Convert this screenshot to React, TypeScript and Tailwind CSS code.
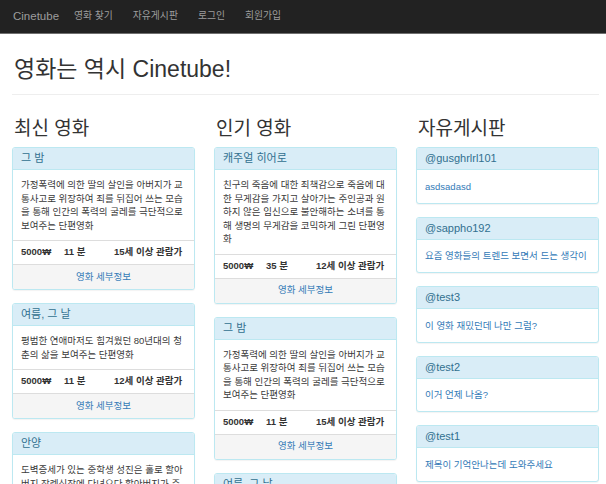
import React from 'react';

const FONT = '"Liberation Sans", "Noto Sans CJK KR", sans-serif';

interface Movie {
  title: string;
  desc: string;
  price: string;
  time: string;
  age: string;
}

const night: Movie = {
  title: '그 밤',
  desc: '가정폭력에 의한 딸의 살인을 아버지가 교통사고로 위장하여 죄를 뒤집어 쓰는 모습을 통해 인간의 폭력의 굴레를 극단적으로 보여주는 단편영화',
  price: '5000₩',
  time: '11 분',
  age: '15세 이상 관람가',
};

const summer: Movie = {
  title: '여름, 그 날',
  desc: '평범한 연애마저도 힘겨웠던 80년대의 청춘의 삶을 보여주는 단편영화',
  price: '5000₩',
  time: '11 분',
  age: '12세 이상 관람가',
};

const anyang: Movie = {
  title: '안양',
  desc: '도벽증세가 있는 중학생 성진은 홀로 할아버지 장례식장에 다녀오다 할아버지가 준 돈을 잃어버리게 되는 단편영화',
  price: '5000₩',
  time: '20 분',
  age: '12세 이상 관람가',
};

const hero: Movie = {
  title: '캐주얼 히어로',
  desc: '친구의 죽음에 대한 죄책감으로 죽음에 대한 무게감을 가지고 살아가는 주인공과 원하지 않은 임신으로 불안해하는 소녀를 통해 생명의 무게감을 코믹하게 그린 단편영화',
  price: '5000₩',
  time: '35 분',
  age: '12세 이상 관람가',
};

const posts = [
  { user: '@gusghrlrl101', text: 'asdsadasd' },
  { user: '@sappho192', text: '요즘 영화들의 트렌드 보면서 드는 생각이' },
  { user: '@test3', text: '이 영화 재밌던데 나만 그럼?' },
  { user: '@test2', text: '이거 언제 나옴?' },
  { user: '@test1', text: '제목이 기억안나는데 도와주세요' },
];

const MovieCard: React.FC<{ movie: Movie }> = ({ movie }) => (
  <div className="mb-[13px] rounded-[3px] border border-[#bce8f1] bg-white shadow-[0_1px_1px_rgba(0,0,0,0.05)] overflow-hidden">
    <div className="flex h-[22px] items-center border-b border-[#bce8f1] bg-[#d9edf7] px-[8px] text-[11px] text-[#31708f]">
      {movie.title}
    </div>
    <div className="py-[8px] pl-[8px] pr-[6px] text-[9.5px] leading-[13.5px] text-[#3a3a3a]">{movie.desc}</div>
    <div className="flex h-[24px] items-center border-t border-[#ddd] px-[8px] text-[9.5px] font-bold text-[#333]">
      <span className="w-[43px]">{movie.price}</span>
      <span className="w-[50px]">{movie.time}</span>
      <span>{movie.age}</span>
    </div>
    <div className="flex h-[25px] items-center justify-center border-t border-[#ddd] bg-[#f5f5f5] text-[9.5px] text-[#337ab7]">
      영화 세부정보
    </div>
  </div>
);

const PostCard: React.FC<{ user: string; text: string }> = ({ user, text }) => (
  <div className="mb-[13px] rounded-[3px] border border-[#bce8f1] bg-white shadow-[0_1px_1px_rgba(0,0,0,0.05)] overflow-hidden">
    <div className="flex h-[22px] items-center border-b border-[#bce8f1] bg-[#d9edf7] px-[8px] text-[11px] text-[#31708f]">
      {user}
    </div>
    <div className="px-[8px] py-[9.5px] text-[9.5px] leading-[13.5px] text-[#337ab7]">{text}</div>
  </div>
);

export default function App() {
  return (
    <div className="h-[484px] w-[606px] overflow-hidden bg-white text-[#333]" style={{ fontFamily: FONT }}>
      <nav className="flex h-[34px] items-center border-b border-[#6f6f6f] bg-[#222] px-[13px] text-[9.8px] text-[#9d9d9d]">
        <span className="text-[11.5px]">Cinetube</span>
        <div className="ml-[15px] flex gap-[20px]">
          <span>영화 찾기</span>
          <span>자유게시판</span>
          <span>로그인</span>
          <span>회원가입</span>
        </div>
      </nav>

      <div className="pl-[12px] pr-[7px]">
        <h1 className="mt-[22px] pl-[2px] text-[23px] leading-[26px]">영화는 역시 Cinetube!</h1>
        <hr className="mt-[12px] border-[#eee]" />

        <div className="grid grid-cols-3 gap-x-[19px]">
          <div>
            <h2 className="mt-[22px] mb-[6px] pl-[2px] text-[19px] leading-[24px]">최신 영화</h2>
            <MovieCard movie={night} />
            <MovieCard movie={summer} />
            <MovieCard movie={anyang} />
          </div>
          <div>
            <h2 className="mt-[22px] mb-[6px] pl-[2px] text-[19px] leading-[24px]">인기 영화</h2>
            <MovieCard movie={hero} />
            <MovieCard movie={night} />
            <MovieCard movie={summer} />
          </div>
          <div>
            <h2 className="mt-[22px] mb-[6px] pl-[2px] text-[19px] leading-[24px]">자유게시판</h2>
            {posts.map((p) => (
              <PostCard key={p.user} user={p.user} text={p.text} />
            ))}
          </div>
        </div>
      </div>
    </div>
  );
}
